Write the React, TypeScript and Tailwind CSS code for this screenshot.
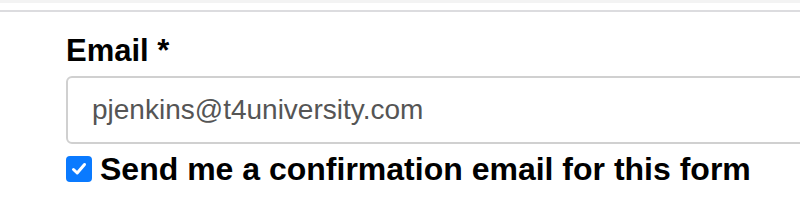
import React from "react";

export default function App() {
  return (
    <div className="w-[800px] h-[224px] bg-white overflow-hidden relative" style={{ fontFamily: '"Liberation Sans", Arial, sans-serif' }}>
      <div className="h-[3px] bg-[#f3f3f3]" />
      <div className="h-[7px]" />
      <div className="h-[2px] bg-[#dcdcdf]" />
      <div className="pl-[66px]">
        <div className="mt-[22px] text-[31px] font-bold leading-[34px] text-black">Email *</div>
        <div className="mt-[8px] w-[760px] h-[68px] border-2 border-[#d0d0d0] rounded-[6px] flex items-center pl-[24px]">
          <span className="text-[28px] text-[#555555]">pjenkins@t4university.com</span>
        </div>
        <label className="mt-[8px] flex items-center gap-[8px]">
          <span className="w-[26px] h-[26px] rounded-[4px] bg-[#0a7aff] flex items-center justify-center shrink-0">
            <svg width="18" height="18" viewBox="0 0 18 18">
              <path d="M3.5 9.5 L7.2 13 L14.5 4.5" stroke="white" strokeWidth="3" fill="none" strokeLinecap="round" strokeLinejoin="round" />
            </svg>
          </span>
          <span className="text-[32px] font-bold leading-[34px] text-black">Send me a confirmation email for this form</span>
        </label>
      </div>
    </div>
  );
}
